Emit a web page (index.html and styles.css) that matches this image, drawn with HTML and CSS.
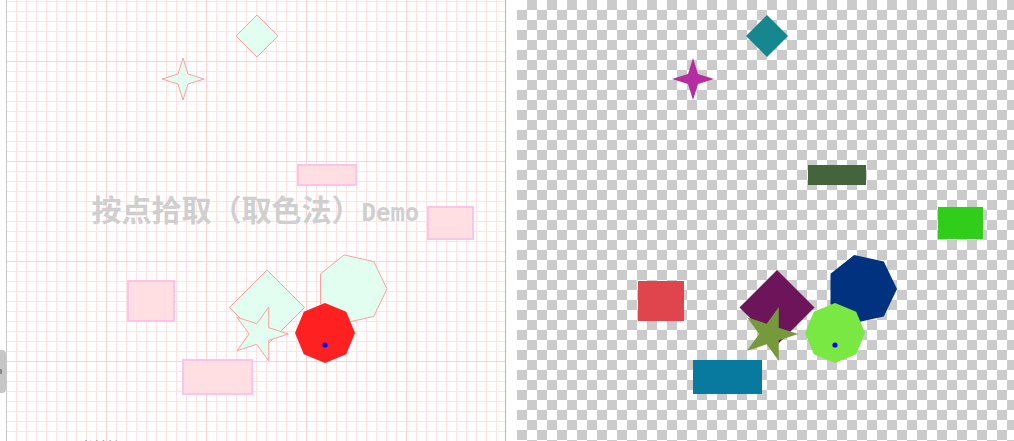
FILE: index.html
```html
<!DOCTYPE html>
<html lang="zh">
<head>
<meta charset="utf-8">
<title>按点拾取（取色法）Demo</title>
<link rel="stylesheet" href="styles.css">
</head>
<body>
<div class="stage">
  <div class="panel panel-grid">
    <svg class="canvas" width="498" height="441" viewBox="0 0 498 441">
      <polygon class="shape-mint" points="250,15 271,36 250,57 229,36"/>
      <polygon class="shape-mint" points="176,58 181,74 197,79 181,84 176,100 171,84 155,79 171,74"/>
      <rect class="shape-pink" x="291" y="165" width="58" height="20"/>
      <rect class="shape-pink" x="421" y="207" width="45" height="32"/>
      <rect class="shape-pink" x="121" y="281" width="46" height="40"/>
      <rect class="shape-pink" x="176" y="360" width="69" height="34"/>
      <polygon class="shape-mint" points="260,270 297.5,307.5 260,345 222.5,307.5"/>
      <polygon class="shape-mint" points="380,289 366.8,316.4 337.2,323.1 313.5,304.2 313.5,273.8 337.2,254.9 366.8,261.6"/>
      <polygon class="shape-mint" points="281.4,334 261.7,340.3 261.8,361 249.7,344.3 230,350.7 242.2,334 230,317.3 249.7,323.7 261.8,307 261.7,327.7"/>
      <polygon class="shape-red" points="348,333 339.2,354.2 318,363 296.8,354.2 288,333 296.8,311.8 318,303 339.2,311.8"/>
      <circle class="dot" cx="318" cy="345" r="2.6"/>
      <text class="title" x="84.5" y="221">按点拾取（取色法）<tspan class="title-latin">Demo</tspan></text>
    </svg>
    <div class="caption">当前拾取</div>
  </div>
  <div class="panel panel-checker">
    <svg class="canvas" width="497" height="441" viewBox="0 0 497 441">
      <polygon fill="#17878f" points="250,15 271,36 250,57 229,36"/>
      <polygon fill="#b52da0" points="176,58 181,74 197,79 181,84 176,100 171,84 155,79 171,74"/>
      <rect fill="#44643c" x="291" y="165" width="58" height="20"/>
      <rect fill="#30cd1a" x="421" y="207" width="45" height="32"/>
      <rect fill="#e0444c" x="121" y="281" width="46" height="40"/>
      <rect fill="#087a9f" x="176" y="360" width="69" height="34"/>
      <polygon fill="#6d155a" points="260,270 297.5,307.5 260,345 222.5,307.5"/>
      <polygon fill="#01327f" points="380,289 366.8,316.4 337.2,323.1 313.5,304.2 313.5,273.8 337.2,254.9 366.8,261.6"/>
      <polygon fill="#769a3b" points="281.4,334 261.7,340.3 261.8,361 249.7,344.3 230,350.7 242.2,334 230,317.3 249.7,323.7 261.8,307 261.7,327.7"/>
      <polygon fill="#79e843" points="348,333 339.2,354.2 318,363 296.8,354.2 288,333 296.8,311.8 318,303 339.2,311.8"/>
      <circle class="dot" cx="318" cy="345" r="2.6"/>
    </svg>
  </div>
</div>
<div class="side-tab"><span class="tab-mark"></span></div>
</body>
</html>
```
FILE: styles.css
```css
html, body {
  margin: 0;
  padding: 0;
  background: #ffffff;
  overflow: hidden;
  height: 441px;
}

.stage {
  display: flex;
  gap: 11px;
  padding-left: 6px;
  height: 441px;
}

.panel {
  position: relative;
  height: 441px;
  flex: none;
  overflow: hidden;
}

.panel-grid {
  width: 498px;
  border-left: 1px solid #c9c9c9;
  border-right: 1px solid #b9b9b9;
  background-color: #ffffff;
  background-image:
    linear-gradient(to right, #ffd2d2 1px, transparent 1px),
    linear-gradient(to bottom, #ffd2d2 1px, transparent 1px),
    linear-gradient(to right, #ffe2e2 1px, transparent 1px),
    linear-gradient(to bottom, #ffe2e2 1px, transparent 1px);
  background-size: 100px 100%, 100% 100px, 10px 100%, 100% 10px;
  background-position: -1px 0, 0 61px, -1px 0, 0 1px;
}

.panel-checker {
  width: 497px;
  background-color: #ffffff;
  background-image: conic-gradient(#cbcbcb 25%, #ffffff 25% 50%, #cbcbcb 50% 75%, #ffffff 75%);
  background-size: 20px 20px;
  background-position: 0 0;
}

.canvas {
  display: block;
}

.shape-mint {
  fill: #e1fef1;
  stroke: #ff9f9f;
  stroke-width: 1;
}

.shape-pink {
  fill: #ffdfe1;
  stroke: #ffc2e8;
  stroke-width: 2;
}

.shape-red {
  fill: #ff2121;
}

.dot {
  fill: #0000ff;
}

.title {
  font-family: "Noto Sans CJK SC", "DejaVu Sans", sans-serif;
  font-size: 30px;
  font-weight: 700;
  fill: #cfcfcf;
}

.title-latin {
  font-family: "DejaVu Sans Mono", monospace;
  font-size: 24px;
}

.caption {
  position: absolute;
  left: 72px;
  top: 436px;
  font-family: "Noto Sans CJK SC", sans-serif;
  font-size: 14px;
  color: #9a9a9a;
}

.side-tab {
  position: absolute;
  left: 0;
  top: 350px;
  width: 6px;
  height: 43px;
  background: #c6c6c6;
  border-radius: 0 4px 4px 0;
}

.tab-mark {
  position: absolute;
  left: 0;
  top: 19px;
  width: 2px;
  height: 5px;
  background: #8a8a8a;
}
```
